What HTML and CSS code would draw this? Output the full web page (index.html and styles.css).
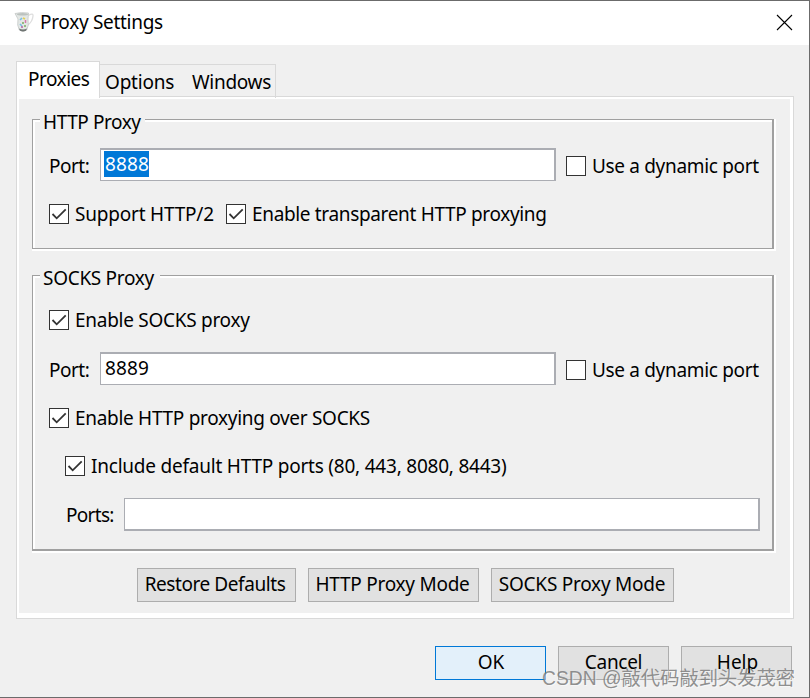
FILE: index.html
```html
<!DOCTYPE html>
<html lang="en">
<head>
<meta charset="utf-8">
<title>Proxy Settings</title>
<link rel="stylesheet" href="styles.css">
</head>
<body>
<div class="window">
  <header class="titlebar">
    <svg class="app-icon" width="22" height="22" viewBox="0 0 22 22">
      <path d="M15.500 4.500Q20.500 1.500 20 5Q19.500 10.500 15 14" fill="none" stroke="#dedede" stroke-width="1.300"/>
      <path d="M2 2.500Q8 1 15.500 2L15 8L15.300 14L13.700 19Q10 21.500 6.300 19L4.700 14L5 8Z" fill="#e3e7e5" stroke="#c4c8c6" stroke-width=".8"/>
      <ellipse cx="9.500" cy="3.300" rx="5.800" ry="1.200" fill="#bcc2bf"/>
      <path d="M6 17.500Q10 19.500 14 17.500L13 19.700Q10 21.200 7 19.700Z" fill="#6f7573"/>
      <path d="M7 9l2-2M7 13l2 2" stroke="#79bfe2" stroke-width="1.600"/>
      <path d="M10 7l2 1" stroke="#e5cf53" stroke-width="1.800"/>
      <path d="M12.500 9v3" stroke="#d679a8" stroke-width="1.500"/>
      <path d="M9 12h2M11 15h2" stroke="#7aae62" stroke-width="1.500"/>
      <path d="M8 16h2" stroke="#b564a0" stroke-width="1.300"/>
    </svg>
    <h1 class="title">Proxy Settings</h1>
    <svg class="close" width="17" height="17" viewBox="0 0 17 17"><path d="M1 1L16 16M16 1L1 16" stroke="#000" stroke-width="1.100"/></svg>
  </header>

  <nav class="tabs">
    <span class="tab tab-active">Proxies</span>
    <div class="tab-rest"><span class="tab-options">Options</span><span class="tab-windows">Windows</span></div>
  </nav>

  <main class="panel">
    <section class="group group-http">
      <div class="group-face">
        <h2 class="legend legend-http">HTTP Proxy</h2>
        <div class="row port-row">
          <span class="port-label">Port:</span>
          <div class="field"><span class="value selected">8888</span></div>
          <label class="check"><i class="box"></i><span class="t-dynamic">Use a dynamic port</span></label>
        </div>
        <div class="row options-row">
          <label class="check"><i class="box"><svg viewBox="0 0 18 18"><path d="M2.500 9L6.700 13.300L15.700 4.300"/></svg></i><span class="t-http2">Support HTTP/2</span></label>
          <label class="check"><i class="box"><svg viewBox="0 0 18 18"><path d="M2.500 9L6.700 13.300L15.700 4.300"/></svg></i><span class="t-transparent">Enable transparent HTTP proxying</span></label>
        </div>
      </div>
    </section>

    <section class="group group-socks">
      <div class="group-face">
        <h2 class="legend legend-socks">SOCKS Proxy</h2>
        <div class="row enable-row">
          <label class="check"><i class="box"><svg viewBox="0 0 18 18"><path d="M2.500 9L6.700 13.300L15.700 4.300"/></svg></i><span class="t-socks">Enable SOCKS proxy</span></label>
        </div>
        <div class="row port-row">
          <span class="port-label">Port:</span>
          <div class="field"><span class="value">8889</span></div>
          <label class="check"><i class="box"></i><span class="t-dynamic">Use a dynamic port</span></label>
        </div>
        <div class="row over-row">
          <label class="check"><i class="box"><svg viewBox="0 0 18 18"><path d="M2.500 9L6.700 13.300L15.700 4.300"/></svg></i><span class="t-over">Enable HTTP proxying over SOCKS</span></label>
        </div>
        <div class="row include-row">
          <label class="check"><i class="box"><svg viewBox="0 0 18 18"><path d="M2.500 9L6.700 13.300L15.700 4.300"/></svg></i><span class="t-include">Include default HTTP ports (80, 443, 8080, 8443)</span></label>
        </div>
        <div class="row ports-row">
          <span class="ports-label">Ports:</span>
          <div class="field field-ports"></div>
        </div>
      </div>
    </section>

    <div class="modes">
      <button class="btn btn-restore">Restore Defaults</button>
      <button class="btn btn-http">HTTP Proxy Mode</button>
      <button class="btn btn-socks">SOCKS Proxy Mode</button>
    </div>
  </main>

  <footer class="actions">
    <button class="btn btn-ok">OK</button>
    <button class="btn btn-cancel">Cancel</button>
    <button class="btn btn-help">Help</button>
  </footer>
  <div class="watermark">CSDN @敲代码敲到头发茂密</div>
</div>
</body>
</html>
```

FILE: styles.css
```css
* { box-sizing: border-box; margin: 0; padding: 0; }

body {
  width: 810px;
  height: 698px;
  overflow: hidden;
  font: 19px/26px "Noto Sans", "Open Sans", sans-serif;
  color: #000;
}

.window {
  position: relative;
  width: 810px;
  height: 698px;
  background: #f0f0f0;
  border: solid #6b6b6b;
  border-width: 1px 1px 1px 0;
  white-space: nowrap;
}

.titlebar {
  display: flex;
  align-items: center;
  height: 44px;
  padding: 0 16px 2px 13px;
  background: #fff;
}
.title { margin-left: 5px; font-size: 19px; font-weight: 400; letter-spacing: -.3px; }
.close { margin-left: auto; }

.tabs { display: flex; align-items: flex-end; height: 53px; padding-left: 16px; }
.tab-active {
  position: relative;
  z-index: 1;
  width: 84px;
  height: 37px;
  padding: 4px 0 0 11px;
  background: #fff;
  border: 1px solid #d9d9d9;
  border-bottom: 0;
  letter-spacing: -.5px;
}
.tab-rest {
  display: flex;
  width: 176px;
  height: 34px;
  padding: 4px 0 0 5px;
  border: solid #d9d9d9;
  border-width: 1px 1px 0 0;
}
.tab-options { width: 87px; letter-spacing: -.2px; }
.tab-windows { letter-spacing: -.3px; }

.panel {
  width: 778px;
  height: 523px;
  margin: -2px 0 0 16px;
  padding: 20px 17px 0 13px;
  background: #f0f0f0;
  border: 1px solid #d9d9d9;
  box-shadow: inset 2px 2px #fff, inset -3px -5px #fff;
}

.group {
  width: 744px;
  margin-left: 2px;
  background: #fff;
  padding: 0 2px 2px 0;
}
.group-http { height: 132px; margin-top: 2px; }
.group-socks { height: 278px; margin-top: 24px; }
.group-face {
  height: 100%;
  background: #f0f0f0;
  border: solid #a0a0a0;
  border-width: 1px 2px 1px 1px;
  box-shadow: inset 2px 2px #fff;
  padding: 0 0 0 16px;
}
.group-socks .group-face { border-bottom-width: 2px; }

.legend {
  height: 26px;
  margin: -11px 0 0 -9px;
  padding-left: 3px;
  background: #f0f0f0;
  font-size: 19px;
  font-weight: 400;
}
.legend-http { width: 105px; letter-spacing: -.42px; }
.legend-socks { width: 120px; letter-spacing: -.3px; }

.row { display: flex; align-items: center; }
.port-row { height: 33px; }
.group-http .port-row { margin-top: 13px; }
.port-label { width: 51px; padding-top: 3px; letter-spacing: -.5px; }
.field {
  width: 456px;
  height: 33px;
  margin-right: 10px;
  padding: 1px 0 0 3px;
  background: #fff;
  border: solid #abadb3;
  border-width: 2px 2px 1px 1px;
}
.value { display: block; width: 45px; height: 26px; padding-left: 1px; letter-spacing: .1px; }
.selected { background: #0078d7; color: #fff; }

.check { display: flex; align-items: center; height: 26px; }
.port-row .check { padding-top: 3px; }
.box {
  flex: none;
  width: 20px;
  height: 20px;
  margin-right: 6px;
  background: #fff;
  border: 1px solid #333;
}
.box svg { display: block; width: 18px; height: 18px; }
.box path { fill: none; stroke: #333; stroke-width: 1.8; }

.t-dynamic { letter-spacing: -.33px; }
.options-row { margin-top: 20px; }
.t-http2 { width: 151px; letter-spacing: -.2px; }
.t-transparent { letter-spacing: -.34px; }
.enable-row { margin-top: 16px; }
.t-socks { letter-spacing: -.28px; }
.group-socks .port-row { margin-top: 19px; }
.over-row { margin-top: 20px; }
.t-over { letter-spacing: -.3px; }
.include-row { margin: 22px 0 0 16px; }
.t-include { letter-spacing: -.22px; }
.ports-row { margin: 19px 0 0 17px; }
.ports-label { width: 58px; letter-spacing: -.7px; }
.field-ports { width: 636px; margin: 0; border-width: 1px 2px 2px 1px; }

.modes { display: flex; gap: 12px; margin: 15px 0 0 107px; }
.btn {
  width: 111px;
  height: 34px;
  padding-bottom: 2px;
  background: #e1e1e1;
  border: 1px solid #adadad;
  font: inherit;
  color: inherit;
  white-space: nowrap;
}
.btn-restore { width: 159px; padding-right: 3px; letter-spacing: -.43px; }
.btn-http { width: 171px; padding-right: 2px; letter-spacing: -.25px; }
.btn-socks { width: 183px; padding-right: 1px; letter-spacing: -.25px; }
.btn-ok { padding-left: 1px; background: #e3f0fa; border-color: #0078d7; }
.btn-cancel { letter-spacing: -.3px; }
.btn-help { padding-left: 2px; }
.actions { display: flex; gap: 12px; margin: 27px 0 0 435px; }

.watermark {
  position: absolute;
  left: 542px;
  top: 665px;
  font: 19.3px/26px "Liberation Sans", "Noto Sans CJK SC", sans-serif;
  color: rgba(125, 125, 125, .85);
  text-shadow: 1px 1px rgba(255, 255, 255, .55);
}
```
